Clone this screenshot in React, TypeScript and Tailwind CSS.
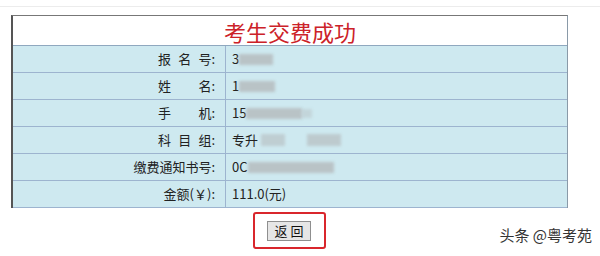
import React from "react";

const font = { fontFamily: '"Noto Sans CJK SC", "Noto Sans", sans-serif' };

function Blur({ className }: { className: string }) {
  return <span className={"inline-block bg-[#b9c3c6] blur-[1.5px] " + className} />;
}

function Spread({ parts }: { parts: string[] }) {
  return (
    <span className="flex w-[57px] justify-between">
      {parts.map((p, i) => (
        <span key={i}>{p}</span>
      ))}
    </span>
  );
}

const rows: { label: React.ReactNode; value: React.ReactNode }[] = [
  {
    label: <Spread parts={["报", "名", "号:"]} />,
    value: (
      <span className="flex items-center">
        <span>3</span>
        <Blur className="w-[34px] h-[11px]" />
      </span>
    ),
  },
  {
    label: <Spread parts={["姓", "名:"]} />,
    value: (
      <span className="flex items-center">
        <span>1</span>
        <Blur className="w-[36px] h-[11px]" />
      </span>
    ),
  },
  {
    label: <Spread parts={["手", "机:"]} />,
    value: (
      <span className="flex items-center">
        <span>15</span>
        <Blur className="w-[56px] h-[11px]" />
        <Blur className="w-[10px] h-[9px] opacity-50" />
      </span>
    ),
  },
  {
    label: <Spread parts={["科", "目", "组:"]} />,
    value: (
      <span className="flex items-center">
        <span>专升</span>
        <Blur className="w-[24px] h-[12px] ml-[3px] opacity-70" />
        <Blur className="w-[34px] h-[12px] ml-[22px] opacity-80" />
      </span>
    ),
  },
  {
    label: <span>缴费通知书号:</span>,
    value: (
      <span className="flex items-center">
        <span>0C</span>
        <Blur className="w-[86px] h-[11px]" />
      </span>
    ),
  },
  {
    label: <span>金额(￥):</span>,
    value: <span>111.0(元)</span>,
  },
];

export default function App() {
  return (
    <div className="w-[600px] h-[256px] bg-white overflow-hidden flex flex-col" style={font}>
      <div className="h-[7px] border-b border-[#ececec] shrink-0" />
      <div className="pl-[11px] pt-[8px]">
        <div className="w-[557px] border-l-2 border-l-[#555] border-r border-r-[#8a9aa8] border-t border-t-[#777]">
          <div className="h-[30px] bg-white flex items-center justify-center border-b border-[#8fa8bf]">
            <span className="text-[22px] leading-none text-[#cc2229]">考生交费成功</span>
          </div>
          {rows.map((r, i) => (
            <div
              key={i}
              className="h-[27px] grid grid-cols-[213px_1fr] bg-[#cee9f0] border-b border-[#9db4cf] text-[13px] text-[#222]"
            >
              <div className="flex items-center justify-end pr-[10px] border-r border-[#9db4cf]">
                {r.label}
              </div>
              <div className="flex items-center pl-[6px]">{r.value}</div>
            </div>
          ))}
        </div>
      </div>
      <div className="relative flex justify-center pt-[4px]">
        <div className="ml-[-22px] w-[73px] h-[37px] border-2 border-[#d9262c] rounded-[3px] flex items-center justify-center">
          <button className="w-[44px] h-[20px] bg-[#e6e6e6] border border-[#8f8f8f] text-[13px] text-[#111] tracking-[3px] pl-[3px] leading-none">
            返回
          </button>
        </div>
        <div className="absolute right-[8px] top-[16px] text-[15px] text-[#333] [text-shadow:0_0_2px_#fff]">
          头条 @粤考苑
        </div>
      </div>
    </div>
  );
}
